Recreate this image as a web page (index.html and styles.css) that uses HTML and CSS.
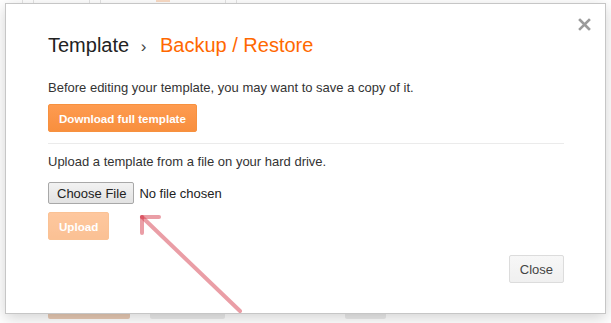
FILE: index.html
```html
<!DOCTYPE html>
<html lang="en">
<head>
    <meta charset="UTF-8">
    <title>Backup / Restore</title>
    <link rel="stylesheet" href="styles.css">
</head>
<body>
    <!-- page behind the modal -->
    <div class="page">
        <div class="page-top">
            <span class="ghost-box"></span>
            <span class="ghost-box"></span>
            <span class="ghost-orange"></span>
            <span class="ghost-box"></span>
        </div>
        <div class="page-bottom">
            <span class="ghost-btn ghost-btn-primary"></span>
            <span class="ghost-btn ghost-btn-wide"></span>
            <span class="ghost-btn ghost-btn-small"></span>
        </div>
    </div>

    <div class="modal">
        <button class="modal-close" aria-label="Close">
            <svg width="13" height="13" viewBox="0 0 13 13">
                <path d="M2 2 L11 11 M11 2 L2 11" stroke="#9a9a9a" stroke-width="2.6" stroke-linecap="square"/>
            </svg>
        </button>

        <h1 class="modal-title">Template <span class="crumb-sep">&rsaquo;</span> <span class="crumb-current">Backup / Restore</span></h1>

        <p class="modal-text">Before editing your template, you may want to save a copy of it.</p>
        <button class="btn btn-orange">Download full template</button>

        <hr class="divider">

        <p class="modal-text">Upload a template from a file on your hard drive.</p>
        <div class="file-row">
            <input type="file" class="file-input">
        </div>
        <button class="btn btn-orange" disabled>Upload</button>

        <div class="modal-footer">
            <button class="btn btn-grey">Close</button>
        </div>
    </div>

    <!-- hand-drawn annotation arrow -->
    <svg class="annotation" width="611" height="323" viewBox="0 0 611 323">
        <g stroke="rgba(214, 62, 78, 0.5)" stroke-width="4" stroke-linecap="round" fill="none">
            <path d="M142 217 L240 311"/>
            <path d="M142 217 L159 217"/>
            <path d="M142 217 L142 233"/>
        </g>
    </svg>
</body>
</html>
```

FILE: styles.css
```css
/* General body styling */
body {
    margin: 0;
    font-family: "Liberation Sans", Arial, sans-serif;
    background-color: #fff;
    width: 611px;
    height: 323px;
    overflow: hidden;
    position: relative;
}

/* Page behind the modal */
.page {
    height: 323px;
    display: flex;
    flex-direction: column;
    justify-content: space-between;
}

.page-top {
    display: flex;
    align-items: flex-start;
    gap: 55px;
    height: 4px;
    padding-left: 22px;
    overflow: hidden;
}

.ghost-box {
    width: 10px;
    height: 3px;
    border: 1px solid #e4e4e4;
    border-top: none;
}

.ghost-orange {
    width: 14px;
    height: 2px;
    background-color: #fbdcc6;
}

.page-bottom {
    display: flex;
    gap: 20px;
    padding: 0 0 4px 48px;
    height: 6px;
}

.ghost-btn {
    height: 6px;
    border-radius: 0 0 2px 2px;
    background-color: #ececec;
}

.ghost-btn-primary {
    width: 82px;
    background-color: #e9cbb5;
}

.ghost-btn-wide {
    width: 75px;
}

.ghost-btn-small {
    width: 41px;
    margin-left: 100px;
}

/* Modal */
.modal {
    position: absolute;
    left: 5px;
    top: 3px;
    box-sizing: border-box;
    width: 601px;
    height: 311px;
    padding: 29px 41px 0 42px;
    background-color: #fff;
    border: 1px solid #c6c6c6;
    box-shadow: 0 4px 14px rgba(0, 0, 0, 0.18);
    color: #333;
}

.modal-close {
    position: absolute;
    top: 14px;
    right: 14px;
    padding: 0;
    border: none;
    background: none;
    cursor: pointer;
}

.modal-title {
    margin: 0 0 21px;
    font-size: 20px;
    font-weight: normal;
    line-height: 24px;
    color: #222;
}

.crumb-sep {
    display: inline-block;
    margin: 0 8px 0 6px;
    font-size: 17px;
    color: #444;
}

.crumb-current {
    color: #ff6800;
}

.modal-text {
    margin: 0 0 8px;
    font-size: 13px;
    line-height: 16px;
    color: #333;
}

/* Buttons */
.btn {
    display: block;
    height: 28px;
    padding: 0 10px;
    font-family: "Liberation Sans", Arial, sans-serif;
    font-size: 11.6px;
    font-weight: bold;
    border-radius: 2px;
    cursor: pointer;
}

.btn-orange {
    color: #fff;
    background: linear-gradient(#fe9b50, #f88f3e);
    border: 1px solid #f7913f;
}

.btn-orange:disabled {
    opacity: 0.55;
    cursor: default;
}

.btn-grey {
    height: 28px;
    padding: 0 10px;
    font-size: 13px;
    font-weight: normal;
    color: #444;
    background: linear-gradient(#f7f7f7, #f0f0f0);
    border: 1px solid #dcdcdc;
}

.divider {
    margin: 11px 0 10px;
    border: none;
    border-top: 1px solid #ebebeb;
}

/* File chooser */
.file-row {
    margin: 12px 0 8px;
    height: 22px;
}

.file-input {
    font-family: "Liberation Sans", Arial, sans-serif;
    font-size: 13px;
    color: #222;
}

.file-input::file-selector-button {
    height: 22px;
    margin-right: 5px;
    padding: 0 7px 0 8px;
    font-family: "Liberation Sans", Arial, sans-serif;
    font-size: 13px;
    color: #222;
    background: linear-gradient(#f2f2f2, #e2e2e2);
    border: 1px solid #a8a8a8;
    border-radius: 2px;
}

.modal-footer {
    display: flex;
    justify-content: flex-end;
    margin-top: 15px;
}

/* Annotation overlay */
.annotation {
    position: absolute;
    left: 0;
    top: 0;
    pointer-events: none;
}
```
